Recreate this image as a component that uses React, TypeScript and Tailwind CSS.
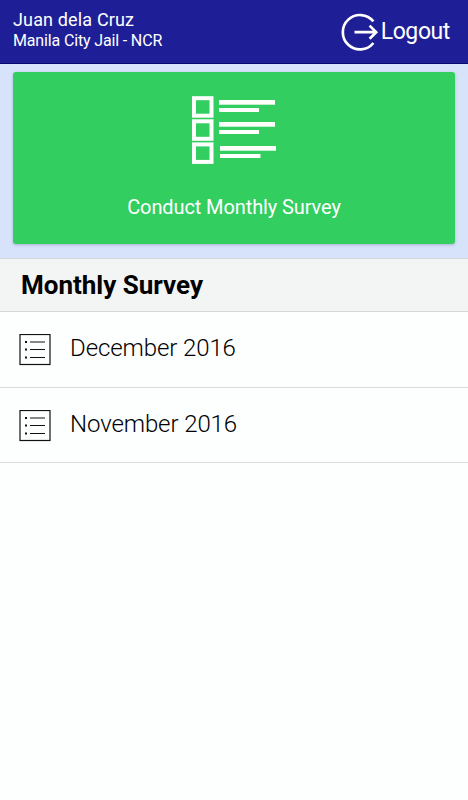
import React from 'react';

interface SurveyItem {
  id: number;
  label: string;
}

const surveys: SurveyItem[] = [
  { id: 1, label: 'December 2016' },
  { id: 2, label: 'November 2016' },
];

const LogoutIcon: React.FC = () => (
  <svg width="38" height="38" viewBox="0 0 38 38" fill="none" stroke="white" strokeWidth="2.7">
    <path d="M32.4 8.4A17.2 17.2 0 1 0 32.4 30" />
    <path d="M13.5 19.2H35.5M28.6 12.6L35.2 19.2L28.6 25.8" />
  </svg>
);

const ChecklistIcon: React.FC = () => (
  <svg width="84" height="68" viewBox="0 0 84 68">
    <g fill="none" stroke="white" strokeWidth="4">
      <rect x="2" y="2.2" width="17.5" height="17.5" />
      <rect x="2" y="25.3" width="17.5" height="17.5" />
      <rect x="2" y="48.4" width="17.5" height="17.5" />
    </g>
    <g fill="white">
      <rect x="27" y="4" width="56" height="4.7" />
      <rect x="27" y="12" width="40" height="4" />
      <rect x="27" y="26" width="56" height="4.7" />
      <rect x="27" y="34" width="40" height="4" />
      <rect x="28" y="50" width="56" height="4.7" />
      <rect x="28" y="58" width="40.5" height="4" />
    </g>
  </svg>
);

const ListIcon: React.FC = () => (
  <svg width="32" height="32" viewBox="0 0 32 32" fill="none" stroke="#111111">
    <rect x="1" y="0.5" width="30" height="30" strokeWidth="1.2" />
    <path d="M11 8H26M11 15.5H26M11 23.5H26" strokeWidth="1.2" />
    <path d="M6 8H8M6 15.5H8M6 23.5H8" strokeWidth="2" />
  </svg>
);

const SurveyRow: React.FC<{ item: SurveyItem }> = ({ item }) => (
  <li className="flex h-[75.5px] items-center border-b border-[#d9dcdd] pt-[2px] pl-[19px]">
    <ListIcon />
    <span className="ml-[19px] pb-[4px] text-[24px] leading-[30px] font-light tracking-[-0.1px]">{item.label}</span>
  </li>
);

const App: React.FC = () => {
  return (
    <div className="min-h-screen w-full bg-[#fdfefe] font-['Roboto',sans-serif] text-black">
      <header className="flex h-16 justify-between border-b border-[#08086f] bg-[#1e1f96] text-white">
        <div className="pt-[9px] pl-[13px]">
          <div className="text-[18px] leading-[21px] tracking-[0.15px]">Juan dela Cruz</div>
          <div className="pt-px text-[16px] leading-[20px] tracking-[-0.15px]">Manila City Jail - NCR</div>
        </div>
        <button className="flex items-center pr-[18px]">
          <LogoutIcon />
          <span className="ml-[2px] text-[23px] leading-[28px] tracking-[-0.4px]">Logout</span>
        </button>
      </header>

      <section className="h-[194px] bg-[#d7e3fa] px-[13px] pt-2">
        <button className="flex h-[172px] w-full flex-col items-center rounded-[3px] bg-[#32ce5f] pt-6 text-white shadow-[0_1px_3px_#a9b2d0]">
          <ChecklistIcon />
          <span className="mt-[29px] text-[20px] leading-[28px] tracking-[-0.1px]">Conduct Monthly Survey</span>
        </button>
      </section>

      <h2 className="h-[54px] border-y border-[#d5d7d8] bg-[#f3f4f4] pt-[10px] pl-[21px] text-[26px] leading-[32px] font-bold text-black">
        Monthly Survey
      </h2>
      <ul>
        {surveys.map((item) => (
          <SurveyRow key={item.id} item={item} />
        ))}
      </ul>
    </div>
  );
};

export default App;
